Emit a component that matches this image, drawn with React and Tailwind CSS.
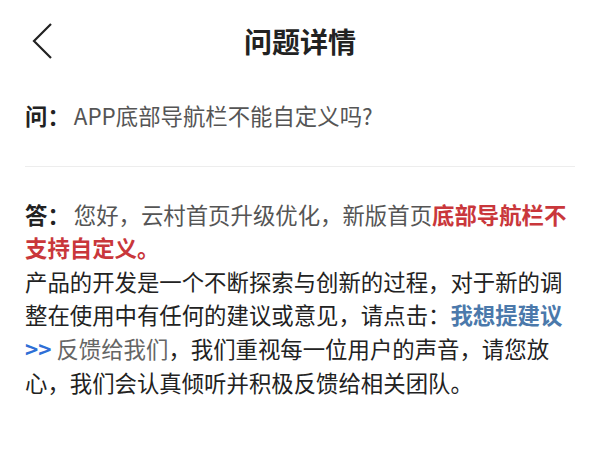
import React from 'react';

const ChevronLeft = () => (
  <svg width="22" height="38" viewBox="0 0 22 38" fill="none">
    <path d="M20 2 L3 19 L20 36" stroke="#222" strokeWidth="2.2" strokeLinejoin="miter" />
  </svg>
);

const App = () => {
  return (
    <div
      className="w-[600px] h-[465px] bg-white text-[#222] overflow-hidden"
      style={{ fontFamily: '"Noto Sans CJK SC", "Noto Sans", sans-serif' }}
    >
      <div className="grid grid-cols-[1fr_auto_1fr] items-center h-[82px] px-[31px]">
        <div className="flex items-center">
          <ChevronLeft />
        </div>
        <h1 className="text-[28px] font-semibold leading-none text-[#222]">问题详情</h1>
        <div />
      </div>

      <div className="px-[25px]">
        <p className="mt-[17px] text-[22.4px] leading-[33.6px] text-[#555]">
          <span className="font-bold text-[#222] mr-[4px]">问：</span>APP底部导航栏不能自定义吗?
        </p>

        <div className="mt-[33px] h-px bg-[#ededed]" />

        <div className="mt-[31px] text-[22.4px] leading-[33.6px]">
          <p className="text-[#555]">
            <span className="font-bold text-[#222] mr-[4px]">答：</span>您好，云村首页升级优化，新版首页
            <span className="font-bold text-[#c9373b]">底部导航栏不支持自定义。</span>
          </p>
          <p className="text-[#222]">
            产品的开发是一个不断探索与创新的过程，对于新的调整在使用中有任何的建议或意见，请点击：
            <span className="font-semibold text-[#4b79ab]">我想提建议</span>
            <span className="font-bold text-[#2f6fd6]">&gt;&gt;</span>
            <span className="text-[#666]"> 反馈给我们</span>，我们重视每一位用户的声音，请您放心，我们会认真倾听并积极反馈给相关团队。
          </p>
        </div>
      </div>
    </div>
  );
};

export default App;
